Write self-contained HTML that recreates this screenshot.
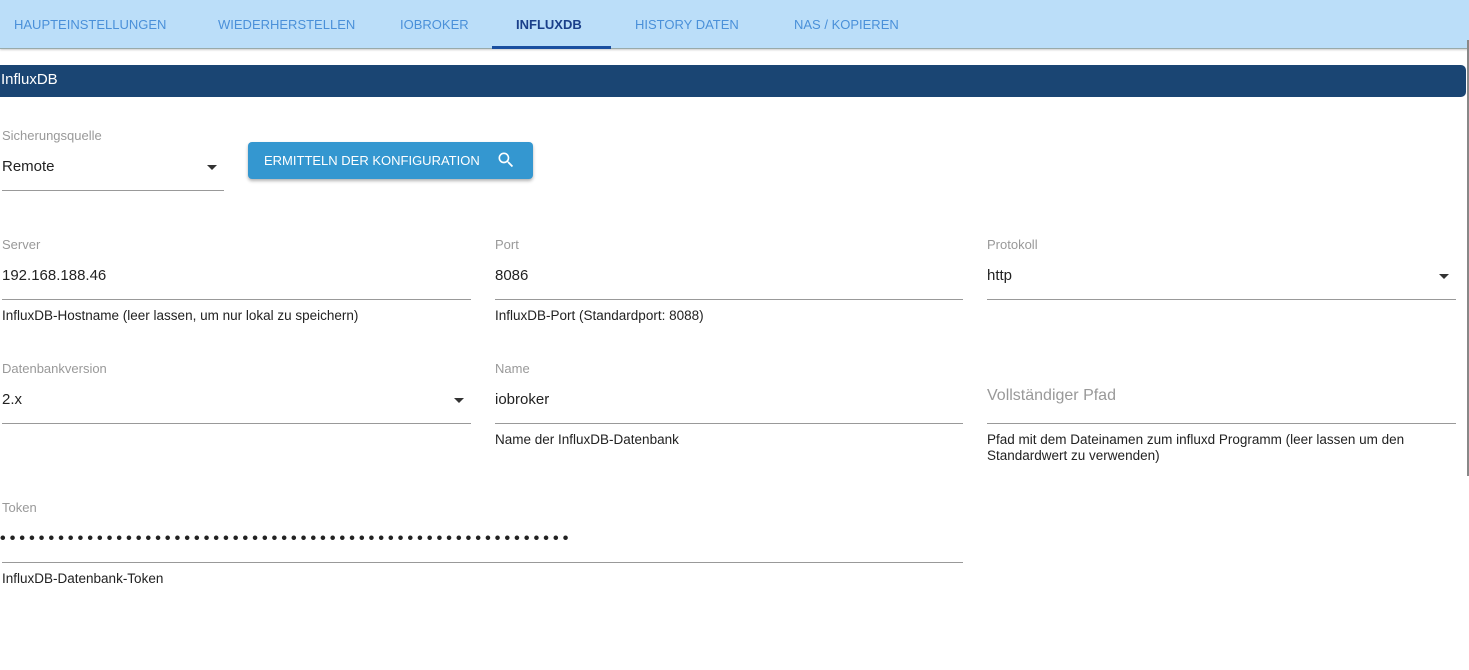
<!DOCTYPE html>
<html><head><meta charset="utf-8"><style>
*{margin:0;padding:0;box-sizing:border-box}
body{width:1469px;height:670px;background:#fff;font-family:"Liberation Sans",sans-serif;position:relative;overflow:hidden}
.tabs{position:absolute;left:0;top:0;width:1469px;height:49px;background:#bbdef9;border-bottom:1px solid #9aa;box-shadow:0 1px 2px rgba(0,0,0,.2)}
.tab{position:absolute;top:17px;font-size:13px;color:#4a90d9}
.tab.act{color:#1a3f8a;font-weight:bold}
.ind{position:absolute;left:492px;top:46px;width:119px;height:3px;background:#1a4fa0}
.hdr{position:absolute;left:0;top:65px;width:1466px;height:32px;background:#1a4573;border-radius:0 5px 5px 0;color:#fff;font-size:15px;padding:6px 0 0 1px}
.lbl{position:absolute;font-size:13px;color:#999}
.val{position:absolute;font-size:15px;color:#222}
.line{position:absolute;height:1px;background:#999}
.help{position:absolute;font-size:13.5px;color:#222;line-height:16px}
.arr{position:absolute;width:0;height:0;border-left:5px solid transparent;border-right:5px solid transparent;border-top:5px solid #333}
.btn{position:absolute;left:248px;top:142px;width:285px;height:37px;background:#3497d0;border-radius:4px;box-shadow:0 2px 3px rgba(0,0,0,.3);color:#fff;font-size:13px;padding:11px 0 0 16px}
.sb{position:absolute;left:1467px;top:40px;width:2px;height:436px;background:#888}
</style></head><body>
<div class="tabs">
<span class="tab" style="left:14px">HAUPTEINSTELLUNGEN</span>
<span class="tab" style="left:218px">WIEDERHERSTELLEN</span>
<span class="tab" style="left:400px">IOBROKER</span>
<span class="tab act" style="left:516px">INFLUXDB</span>
<span class="tab" style="left:635px">HISTORY DATEN</span>
<span class="tab" style="left:794px">NAS / KOPIEREN</span>
<div class="ind"></div>
</div>
<div class="sb"></div>
<div class="hdr">InfluxDB</div>

<div class="lbl" style="left:2px;top:128px">Sicherungsquelle</div>
<div class="val" style="left:2px;top:158px">Remote</div>
<div class="arr" style="left:207px;top:165px"></div>
<div class="line" style="left:2px;top:190px;width:222px"></div>
<div class="btn">ERMITTELN DER KONFIGURATION
<svg style="position:absolute;left:248px;top:8px" width="20" height="20" viewBox="0 0 24 24"><path fill="#fff" d="M15.5 14h-.79l-.28-.27A6.47 6.47 0 0016 9.5 6.5 6.5 0 109.5 16c1.61 0 3.09-.59 4.230-1.57l.27.28v.79l5 4.99L20.49 19l-4.99-5zm-6 0C7.01 14 5 11.990 5 9.5S7.01 5 9.5 5 14 7.01 14 9.5 11.99 14 9.5 14z"/></svg></div>

<div class="lbl" style="left:2px;top:237px">Server</div>
<div class="val" style="left:2px;top:267px">192.168.188.46</div>
<div class="line" style="left:2px;top:299px;width:469px"></div>
<div class="help" style="left:2px;top:308px">InfluxDB-Hostname (leer lassen, um nur lokal zu speichern)</div>

<div class="lbl" style="left:495px;top:237px">Port</div>
<div class="val" style="left:495px;top:267px">8086</div>
<div class="line" style="left:495px;top:299px;width:468px"></div>
<div class="help" style="left:495px;top:308px">InfluxDB-Port (Standardport: 8088)</div>

<div class="lbl" style="left:987px;top:237px">Protokoll</div>
<div class="val" style="left:987px;top:267px">http</div>
<div class="arr" style="left:1439px;top:274px"></div>
<div class="line" style="left:987px;top:299px;width:469px"></div>

<div class="lbl" style="left:2px;top:361px">Datenbankversion</div>
<div class="val" style="left:2px;top:391px">2.x</div>
<div class="arr" style="left:454px;top:398px"></div>
<div class="line" style="left:2px;top:423px;width:469px"></div>

<div class="lbl" style="left:495px;top:361px">Name</div>
<div class="val" style="left:495px;top:391px">iobroker</div>
<div class="line" style="left:495px;top:423px;width:468px"></div>
<div class="help" style="left:495px;top:432px">Name der InfluxDB-Datenbank</div>

<div class="val" style="left:987px;top:387px;color:#999;font-size:16px">Vollständiger Pfad</div>
<div class="line" style="left:987px;top:423px;width:469px"></div>
<div class="help" style="left:987px;top:432px">Pfad mit dem Dateinamen zum influxd Programm (leer lassen um den<br>Standardwert zu verwenden)</div>

<div class="lbl" style="left:2px;top:500px">Token</div>
<div class="val" style="left:0px;top:530px;font-size:16px;font-weight:bold;letter-spacing:4.1px;white-space:nowrap">•••••••••••••••••••••••••••••••••••••••••••••••••••••••••••</div>
<div class="line" style="left:2px;top:562px;width:961px"></div>
<div class="help" style="left:2px;top:571px">InfluxDB-Datenbank-Token</div>
</body></html>
